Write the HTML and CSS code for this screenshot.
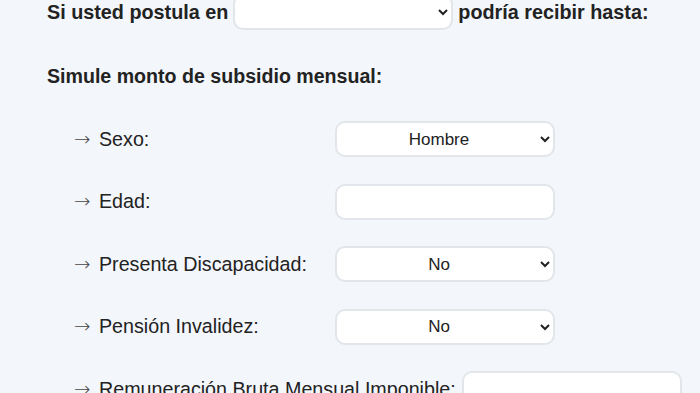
FILE: index.html
```
<!DOCTYPE html>
<html lang="es">
<head>
    <meta charset="UTF-8">
    <meta name="viewport" content="width=device-width, initial-scale=1.0">
    <title>Simulador de subsidio</title>
    <link rel="stylesheet" href="styles.css">
</head>
<body>
    <div class="container">
        <p class="intro">
            Si usted postula en
            <select class="field field-inline">
                <option></option>
            </select>
            podría recibir hasta:
        </p>

        <h2>Simule monto de subsidio mensual:</h2>

        <div class="form">
            <div class="row">
                <label><span class="arrow">&rarr;</span> Sexo:</label>
                <select class="field">
                    <option>Hombre</option>
                    <option>Mujer</option>
                </select>
            </div>
            <div class="row">
                <label><span class="arrow">&rarr;</span> Edad:</label>
                <input type="text" class="field">
            </div>
            <div class="row">
                <label><span class="arrow">&rarr;</span> Presenta Discapacidad:</label>
                <select class="field">
                    <option>No</option>
                    <option>Sí</option>
                </select>
            </div>
            <div class="row">
                <label><span class="arrow">&rarr;</span> Pensión Invalidez:</label>
                <select class="field">
                    <option>No</option>
                    <option>Sí</option>
                </select>
            </div>
            <div class="row">
                <label><span class="arrow">&rarr;</span> Remuneración Bruta Mensual Imponible:</label>
                <input type="text" class="field">
            </div>
        </div>
    </div>
</body>
</html>
```

FILE: styles.css
```
/* General Styles */
body {
    font-family: 'Liberation Sans', Arial, sans-serif;
    background-color: #f3f6fb;
    margin: 0;
    padding: 0;
    color: #222;
}

.container {
    padding: 0 47px;
}

.intro {
    margin: -6px 0 0;
    font-size: 19.8px;
    font-weight: bold;
    display: flex;
    align-items: center;
    gap: 5px;
}

h2 {
    margin: 26px 0 0;
    font-size: 19.6px;
    font-weight: bold;
    line-height: 40px;
}

.form {
    margin-top: 25px;
    padding-left: 27px;
}

.row {
    display: flex;
    align-items: center;
    gap: 6px;
    height: 36px;
    margin-bottom: 26.5px;
    font-size: 19.7px;
}

.row label {
    flex-shrink: 0;
    min-width: 255px;
    white-space: nowrap;
}

.arrow {
    font-family: 'DejaVu Sans', sans-serif;
    font-weight: 200;
    color: #444;
    margin-right: 3px;
}

.field {
    flex-shrink: 0;
    width: 220px;
    height: 36px;
    box-sizing: border-box;
    background-color: #fff;
    border: 2px solid #e2e5ea;
    border-radius: 10px;
    font-family: 'Liberation Sans', Arial, sans-serif;
    font-size: 17px;
    color: #222;
    text-align: center;
    text-align-last: center;
    padding: 0 8px;
    outline: none;
}
```
